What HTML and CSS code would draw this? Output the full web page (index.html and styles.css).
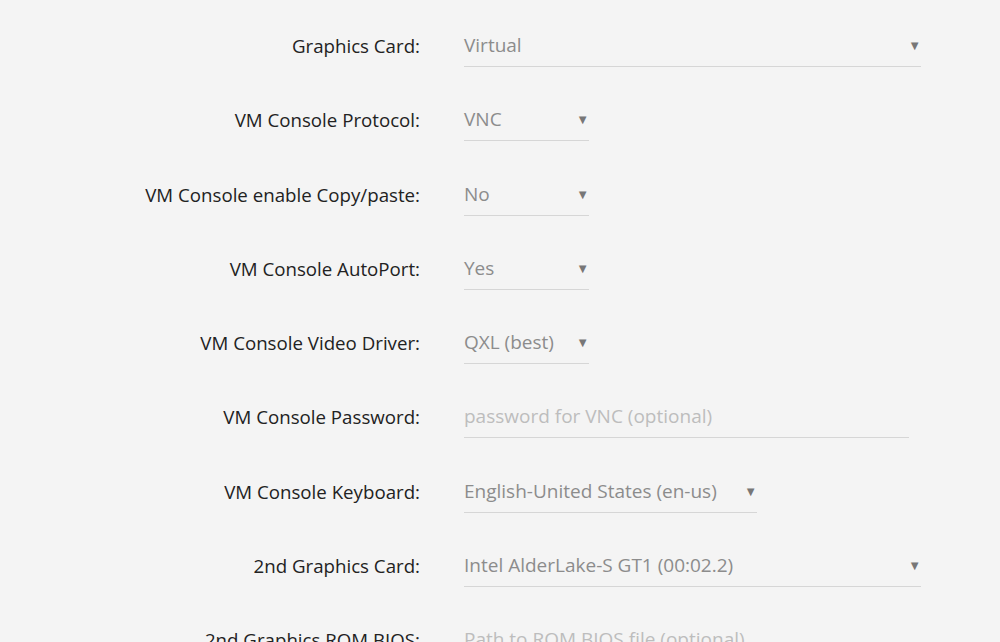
FILE: index.html
```html
<!DOCTYPE html>
<html lang="en">

<head>
  <meta charset="UTF-8">
  <meta name="viewport" content="width=device-width, initial-scale=1.0">
  <title>VM Settings</title>
  <link rel="stylesheet" href="styles.css">
</head>

<body>
  <div class="form">
    <div class="row">
      <div class="label">Graphics Card:</div>
      <div class="select wide"><span>Virtual</span><i class="arrow">&#9660;</i></div>
    </div>
    <div class="row">
      <div class="label">VM Console Protocol:</div>
      <div class="select small"><span>VNC</span><i class="arrow">&#9660;</i></div>
    </div>
    <div class="row">
      <div class="label">VM Console enable Copy/paste:</div>
      <div class="select small"><span>No</span><i class="arrow">&#9660;</i></div>
    </div>
    <div class="row">
      <div class="label">VM Console AutoPort:</div>
      <div class="select small"><span>Yes</span><i class="arrow">&#9660;</i></div>
    </div>
    <div class="row">
      <div class="label">VM Console Video Driver:</div>
      <div class="select small"><span>QXL (best)</span><i class="arrow">&#9660;</i></div>
    </div>
    <div class="row">
      <div class="label">VM Console Password:</div>
      <input class="text-input" type="password" placeholder="password for VNC (optional)">
    </div>
    <div class="row">
      <div class="label">VM Console Keyboard:</div>
      <div class="select medium"><span>English-United States (en-us)</span><i class="arrow">&#9660;</i></div>
    </div>
    <div class="row">
      <div class="label">2nd Graphics Card:</div>
      <div class="select wide"><span>Intel AlderLake-S GT1 (00:02.2)</span><i class="arrow">&#9660;</i></div>
    </div>
    <div class="row">
      <div class="label">2nd Graphics ROM BIOS:</div>
      <input class="text-input" type="text" placeholder="Path to ROM BIOS file (optional)">
    </div>
  </div>
</body>

</html>
```

FILE: styles.css
```css
body {
  background-color: #f4f4f4;
  font-family: 'Open Sans', 'Noto Sans', sans-serif;
  font-size: 18.7px;
  color: #222;
  margin: 0;
  overflow: hidden;
}

.form {
  padding-top: 25px;
}

.row {
  display: flex;
  align-items: flex-start;
  margin-bottom: 32.3px;
}

.label {
  width: 420px;
  text-align: right;
  line-height: 41px;
  height: 42px;
}

/* fake select boxes */
.select,
.text-input {
  margin-left: 44px;
  height: 42px;
  box-sizing: border-box;
  border-bottom: 1px solid #d6d6d6;
  color: #8c8c8c;
  font-size: 19px;
}

.select {
  display: flex;
  justify-content: space-between;
  align-items: center;
  padding-bottom: 1px;
}

.select .arrow {
  font-style: normal;
  font-size: 13px;
  color: #777;
  margin-right: 0;
}

.small {
  width: 125px;
}

.medium {
  width: 293px;
}

.wide {
  width: 457px;
}

.text-input {
  width: 445px;
  background: transparent;
  border: none;
  border-bottom: 1px solid #d6d6d6;
  font-family: inherit;
  padding: 0 0 1px 0;
  outline: none;
}

.text-input::placeholder {
  color: #bdbdbd;
}
```
